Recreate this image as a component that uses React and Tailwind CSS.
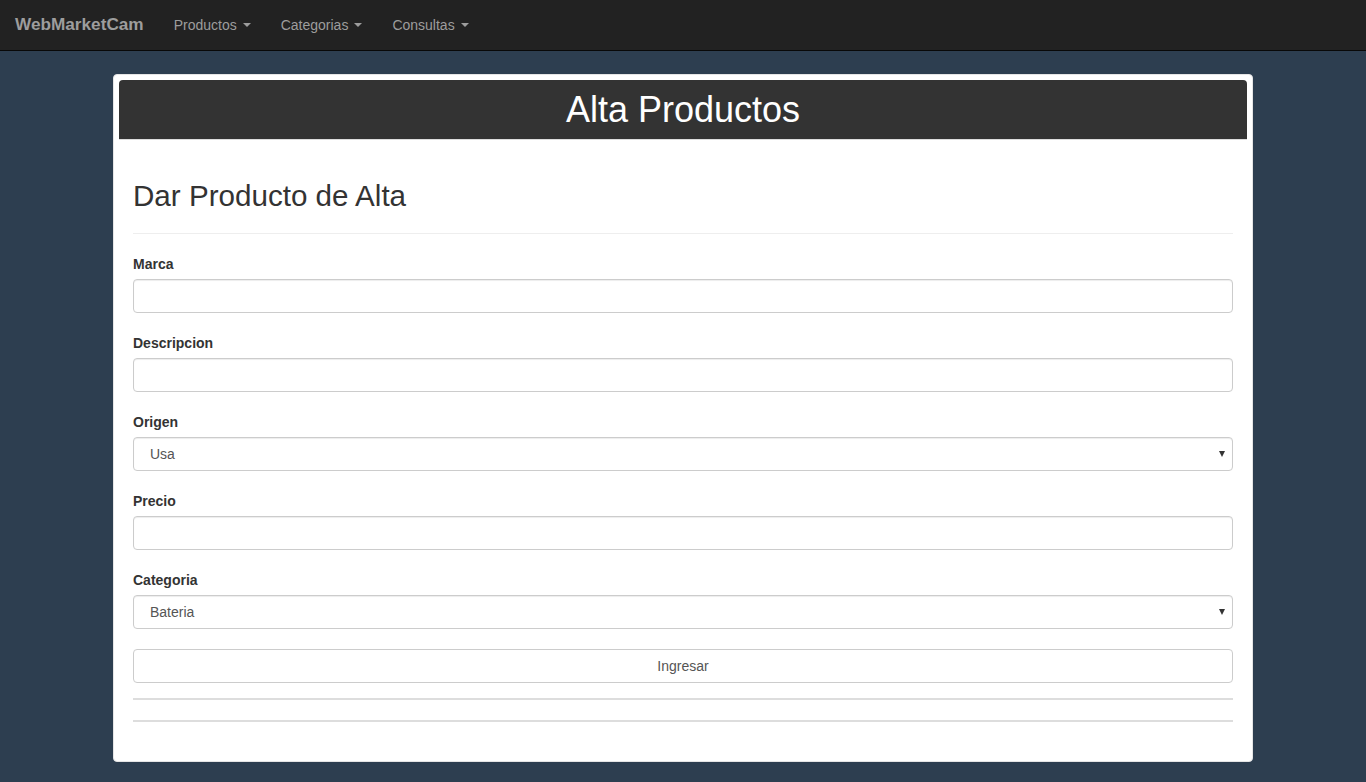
import React from "react";

function Caret() {
  return (
    <span className="inline-block ml-[6px] align-middle w-0 h-0 border-t-[4px] border-t-current border-l-[4px] border-l-transparent border-r-[4px] border-r-transparent" />
  );
}

function Label({ children }) {
  return <label className="block text-[14px] leading-[20px] font-bold text-[#333] mb-[5px]">{children}</label>;
}

function Input() {
  return (
    <div className="h-[34px] w-full bg-white border border-[#ccc] rounded-[4px] shadow-[inset_0_1px_1px_rgba(0,0,0,0.075)]" />
  );
}

function Select({ value }) {
  return (
    <div className="h-[34px] w-full bg-white border border-[#ccc] rounded-[4px] shadow-[inset_0_1px_1px_rgba(0,0,0,0.075)] flex items-center justify-between pl-[16px] pr-[7px] text-[14px] text-[#555]">
      <span>{value}</span>
      <span className="w-0 h-0 border-t-[6px] border-t-[#333] border-l-[3.5px] border-l-transparent border-r-[3.5px] border-r-transparent" />
    </div>
  );
}

export default function App() {
  return (
    <div className="min-h-[782px] bg-[#2d3e50]" style={{ fontFamily: '"Liberation Sans", Arial, Helvetica, sans-serif' }}>
      <nav className="h-[51px] bg-[#222] border-b border-[#080808] flex items-center">
        <span className="pl-[15px] pr-[15px] text-[17.2px] font-bold text-[#9d9d9d]">WebMarketCam</span>
        <div className="flex text-[14px] text-[#9d9d9d]">
          <span className="px-[15px] flex items-center">Productos<Caret /></span>
          <span className="px-[15px] flex items-center">Categorias<Caret /></span>
          <span className="px-[15px] flex items-center">Consultas<Caret /></span>
        </div>
      </nav>
      <div className="w-[1140px] mx-auto pt-[23px] pb-[20px]">
        <div className="bg-white border border-[#e5e5e5] rounded-[4px] p-[5px]">
          <div className="h-[60px] bg-[#333] rounded-t-[4px] border-b border-[#ddd] flex items-center justify-center">
            <span className="text-[36px] text-white leading-none">Alta Productos</span>
          </div>
          <div className="px-[14px] pb-[34px]">
            <h2 className="mt-[39px] text-[29.6px] leading-[33px] text-[#333] pb-[21px] border-b border-[#eee]">Dar Producto de Alta</h2>
            <div className="mt-[20px] flex flex-col gap-[20px]">
              <div>
                <Label>Marca</Label>
                <Input />
              </div>
              <div>
                <Label>Descripcion</Label>
                <Input />
              </div>
              <div>
                <Label>Origen</Label>
                <Select value="Usa" />
              </div>
              <div>
                <Label>Precio</Label>
                <Input />
              </div>
              <div>
                <Label>Categoria</Label>
                <Select value="Bateria" />
              </div>
              <div className="h-[34px] w-full bg-white border border-[#ccc] rounded-[4px] flex items-center justify-center text-[14px] text-[#555]">
                Ingresar
              </div>
            </div>
            <div className="mt-[15px] border-t-2 border-[#ddd]" />
            <div className="mt-[20px] border-t-2 border-[#ddd]" />
          </div>
        </div>
      </div>
    </div>
  );
}
